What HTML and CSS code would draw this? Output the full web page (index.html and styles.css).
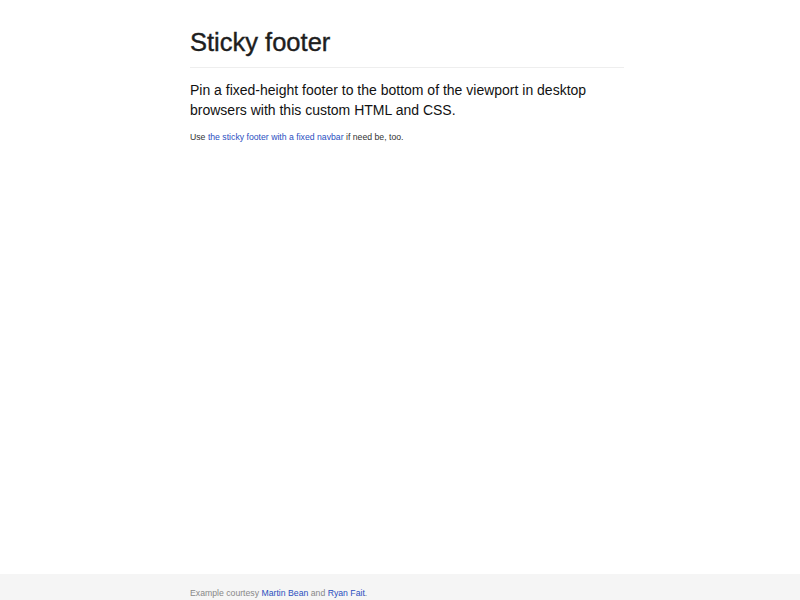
FILE: index.html
```html
<!DOCTYPE html>
<html>
<head>
<meta charset="utf-8">
<title>Sticky footer</title>
<link rel="stylesheet" href="styles.css">
</head>
<body>
<div class="wrap">
  <div class="container">
    <div class="page-header">
      <h1>Sticky footer</h1>
    </div>
    <p class="lead">Pin a fixed-height footer to the bottom of the viewport in desktop browsers with this custom HTML and CSS.</p>
    <p class="note">Use <a href="#">the sticky footer with a fixed navbar</a> if need be, too.</p>
  </div>
</div>
<div class="footer">
  <div class="container">
    <p class="muted">Example courtesy <a href="#">Martin Bean</a> and <a href="#">Ryan Fait</a>.</p>
  </div>
</div>
</body>
</html>
```

FILE: styles.css
```css
html, body {
  margin: 0;
  height: 100%;
  overflow: hidden;
}
body {
  font-family: "Liberation Sans", Arial, sans-serif;
  color: #333;
  background: #fff;
  display: flex;
  flex-direction: column;
  font-size: 8.7px;
  line-height: 13.3px;
}
.wrap {
  flex: 1;
}
.container {
  width: 434px;
  padding-left: 14px;
  margin: 0 auto;
}
.page-header {
  margin: 0 0 13px;
  padding: 0 0 11px;
  border-bottom: 1px solid #eee;
}
h1 {
  margin: 0;
  padding-top: 28px;
  font-size: 25.5px;
  font-weight: 500;
  line-height: 1.1;
  color: #1e1e1e;
  -webkit-text-stroke: 0.4px #1e1e1e;
}
.lead {
  margin: 0 0 11px;
  font-size: 14px;
  line-height: 19.6px;
  color: #111;
}
.note {
  margin: 0;
  color: #333;
}
a {
  color: #2a4fbf;
  text-decoration: none;
}
.footer {
  height: 26px;
  background: #f5f5f5;
  overflow: hidden;
}
.muted {
  margin: 13px 0 0;
  color: #888;
}
```
